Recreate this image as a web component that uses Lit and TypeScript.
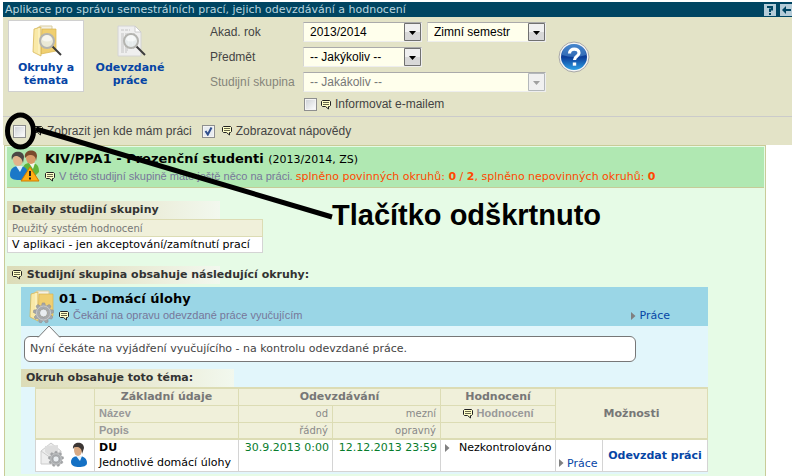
import { LitElement, html, css, svg } from "lit";
import { customElement } from "lit/decorators.js";

const note = html`<svg class="note" width="11" height="10" viewBox="0 0 11 10" aria-hidden="true">
  <path d="M1.500.5h7l1 1v4l-1 1h-1v2.500l-3-2.500h-3l-1-1v-4z" fill="#ffffc8" stroke="#222" />
  <path d="M2 2.500h6M2 4.500h6" stroke="#66664a" />
</svg>`;

const lens = svg`<path d="M22 21l9 9" stroke="#3c3c3c" stroke-width="2"/>
  <circle cx="17" cy="16" r="7" fill="#e9eff0" fill-opacity=".8" stroke="#b4b4b0" stroke-width="2"/>
  <path d="M12 15a5 5 0 0 1 10 0q-5 3-10 0z" fill="#fff" fill-opacity=".6"/>`;

const folder = svg`<path d="M6 4l4-3h12v23H8z" fill="#f4f1e6" stroke="#d9cda0"/>
  <path d="M12 4h14v22l-15 3z" fill="#f0cf70" stroke="#d8b450" stroke-width=".7"/>
  <path d="M4 4l7-2v29l-8-4z" fill="#f9e9a8" stroke="#d4b04a" stroke-width=".7"/>
  <path d="M9 3v26" stroke="#fdf6d0"/>`;

const teeth = [0, 40, 80, 120, 160, 200, 240, 280, 320];
const gear = svg`<g>${teeth.map(
  (a) => svg`<path d="M-2-7.500l.8-2.600h2.400L2-7.500z" fill="#a4a6a8" stroke="#8b8d90" stroke-width=".5" transform="rotate(${a})"/>`
)}<circle r="6" fill="none" stroke="#a8aaad" stroke-width="4"/><circle r="7" fill="none" stroke="#c6c8ca" stroke-width="1"/><circle r="4" fill="#e9edf0" stroke="#87898c" stroke-width=".7"/></g>`;

@customElement("app-root")
export class AppRoot extends LitElement {
  static styles = css`
    :host {
      display: block;
      position: relative;
      min-height: 100vh;
      overflow: hidden;
      box-sizing: border-box;
      padding: 2px 2px 0 3px;
      background: #fff;
      color: #000;
      font: 11px/15px "DejaVu Sans", Verdana, sans-serif;
    }
    * { box-sizing: border-box; }
    svg { display: block; flex: none; }
    a { color: #0645a5; text-decoration: none; }
    h1, h2, h3, p { margin: 0; font-size: 11px; }
    .arial { font: 12px/15px "Liberation Sans", Arial, sans-serif; }
    .note { display: inline-block; vertical-align: -2px; }

    .titlebar { display: flex; align-items: center; gap: 4px; height: 15px; padding-left: 2px; background: #004562; color: #b9d5df; }
    .titlebar h1 { flex: 1; font-weight: 400; line-height: 15px; }
    .tool { width: 12px; height: 12px; padding: 0; border: 0; background: #b5ccd8; color: #004562; }

    .toolbar { display: flex; height: 100px; background: #e3e3c7; border-bottom: 1px solid #cbcbcb; }
    .tabs { display: flex; gap: 8px; padding: 3px 0 0 5px; width: 207px; }
    .tab { display: flex; flex-direction: column; align-items: center; width: 76px; height: 72px; padding: 4px 0 0; border: 1px solid transparent; text-align: center; font-weight: 700; line-height: 13px; }
    .tab.active { background: #fff; border-color: #d0d0d0; }
    .tab svg { margin-bottom: 4px; }

    .form { display: grid; grid-template-columns: 88px 119px 119px; grid-template-rows: 20px 20px 20px 15px; gap: 5px; padding-top: 5px; color: #444; }
    .form > label { align-self: center; white-space: nowrap; }
    .form .off { color: #85857a; }
    .pick { display: grid; }
    .pick.wide { grid-column: 2 / 4; }
    .pick > * { grid-area: 1 / 1; }
    .pick svg { justify-self: end; align-self: center; margin-right: 1px; pointer-events: none; }
    select { appearance: none; width: 100%; height: 20px; margin: 0; padding: 0 20px 0 6px; border: 1px solid #eee; border-top: 1px solid #aaa; border-left-color: #d6d6d0; border-radius: 0; background: #ffffec; color: #000; font: 12px/17px "Liberation Sans", Arial, sans-serif; }
    select:disabled { color: #777; opacity: 1; }
    .mail { grid-column: 2 / 4; }
    .check { display: flex; align-items: center; gap: 4px; padding-left: 1px; white-space: nowrap; }
    .check label { display: flex; align-items: center; gap: 3px; }
    input { appearance: none; flex: none; width: 13px; height: 13px; margin: 0; border: 1px solid #8e8f8f; background: linear-gradient(135deg, #ccd0d4, #fff); box-shadow: inset 0 0 0 1px #f4f4f4; }
    input:checked { background: url("data:image/svg+xml,%3Csvg xmlns='http://www.w3.org/2000/svg' viewBox='0 0 11 11'%3E%3Cpath d='M2.500 5l2.300 3.500L8.500 1.500' fill='none' stroke='%23314f8c' stroke-width='2'/%3E%3C/svg%3E") #e8ecf0; }
    .help { align-self: flex-start; margin: 24px 0 0 12px; padding: 0; border: 0; background: none; }

    .filters { display: flex; gap: 9px; height: 28px; padding-left: 9px; background: #e3e3c7; color: #444; }
    .filters .check { gap: 7px; }
    .filters .check label { gap: 3px; }

    .panel { min-height: 340px; margin: 0 26px 0 1px; padding: 1px 0 0 2px; background: #e6fbe6; border: 1px solid #c9cb98; }
    .group { display: flex; gap: 4px; height: 41px; margin-right: 1px; padding: 3px 2px; background: #b0e8b2; border-bottom: 1px solid #c6cb98; }
    .group h2, .circle h3 { font-size: 13px; line-height: 17px; }
    .group small { font-size: 11px; font-weight: 400; }
    .hint { font: 11px/16px "Liberation Sans", Arial, sans-serif; color: #77779a; }
    .score { font: 11px/16px "DejaVu Sans", Verdana, sans-serif; color: #ff4800; }
    .line { white-space: nowrap; }
    .label { height: 18px; padding-left: 5px; background: linear-gradient(90deg, #dcdcb8, #e6e6cc 45%, #f2f8ee) no-repeat 0 0 / 213px 100%; color: #333; line-height: 18px; white-space: nowrap; }
    .details { margin-top: 13px; }
    .circles { margin-top: 13px; }

    table { border-collapse: collapse; }
    th, td { border: 1px solid #dcdcb4; padding: 0 4px; line-height: 15px; white-space: nowrap; }
    th { background: #f0f0da; color: #777; }
    td { background: #fff; border-color: #d4d4d4; }
    .sys { width: 256px; }
    .sys th { height: 17px; font-weight: 400; font-size: 10px; text-align: left; }
    .sys td { height: 16px; }

    .block { margin: 3px 57px 0 14px; padding-bottom: 2px; background: #e2f6fb; }
    .circle { display: flex; gap: 5px; height: 39px; padding: 3px 38px 3px 6px; background: #9ad6e6; }
    .circle > div { flex: 1; }
    .go { display: flex; align-items: center; gap: 3px; }
    .circle .go { align-self: flex-end; }
    .bubble { position: relative; height: 26px; margin: 10px 72px 7px 3px; padding-left: 5px; background: #fff; border: 1px solid #777; border-radius: 6px; line-height: 24px; color: #444; white-space: nowrap; }
    .tail { position: absolute; left: 12px; top: -12px; }

    .topics { width: calc(100% - 14px); margin-left: 14px; table-layout: fixed; }
    .topics thead tr { height: 17px; }
    .topics tbody tr { height: 32px; }
    .topics thead { border-top: 2px solid #dcdcb4; border-bottom: 2px solid #dcdcb4; }
    .c1 { width: 59px; } .c2 { width: 144px; } .c3 { width: 94px; } .c4 { width: 108px; } .c5 { width: 115px; } .c6 { width: 47px; }
    .topics .sub { font: bold 11px/15px "Liberation Sans", Arial, sans-serif; color: #999; }
    .left { text-align: left; }
    .topics .date { font-weight: 400; font-size: 10px; text-align: right; color: #888; }
    .top { vertical-align: top; }
    .bottom { vertical-align: bottom; padding: 0 3px; }
    .ok { color: #087c2c; text-align: right; padding: 0 3px; }
    .people { display: flex; gap: 6px; }
    .state { display: flex; align-items: center; gap: 9px; }
    .strong { font-weight: 700; }
    .center { text-align: center; padding: 0; }

    .mark { position: absolute; left: 0; top: 110px; pointer-events: none; }
    .caption { position: absolute; left: 332px; top: 198px; font: bold 29px/34px "Liberation Sans", Arial, sans-serif; white-space: nowrap; }
  `;

  private arrow(off = false) {
    return html`<svg width="17" height="18" viewBox="0 0 17 18" aria-hidden="true">
      <path d="M.5.5h16v17H.5z" fill="#f0f0f0" stroke=${off ? "#b4b8bb" : "#707070"} />
      <path d="M1 9h15v8H1z" fill=${off ? "#f0f0f0" : "#d8d8d8"} />
      <path d="M5 8h7l-3.500 4z" fill=${off ? "#a0a0a0" : "#000"} />
    </svg>`;
  }

  private go() {
    return html`<svg width="5" height="8" viewBox="0 0 5 8" aria-hidden="true"><path d="M0 0l4.500 4L0 8z" fill="#808080" /></svg>`;
  }

  render() {
    return html`
      <header class="titlebar">
        <h1>Aplikace pro správu semestrálních prací, jejich odevzdávání a hodnocení</h1>
        <button class="tool" aria-label="Nápověda">
          <svg width="12" height="12"><path d="M3 3h5v2.500H6V8M6 9v2" fill="none" stroke="#004562" stroke-width="2" /></svg>
        </button>
        <button class="tool" aria-label="Zpět">
          <svg width="12" height="12"><path d="M2 6l4-4v3h5v2H6v3z" fill="#004562" /></svg>
        </button>
      </header>

      <div class="toolbar">
        <nav class="tabs">
          <a class="tab active" href="#okruhy">
            <svg width="32" height="32" viewBox="0 0 32 32" aria-hidden="true">${folder}${lens}</svg>Okruhy a<br />témata</a>
          <a class="tab" href="#prace">
            <svg width="32" height="32" viewBox="0 0 32 32" aria-hidden="true">
              <path d="M4 1h17l6 6v24H4z" fill="#efefef" stroke="#d4d4d4" />
              <path d="M21 1v6h6z" fill="#fff" stroke="#ccc" />
              <path d="M7 5h9M7 9h14M7 11h16M7 13h16M7 15h16M7 17h16M7 19h16M7 21h16M7 23h13M7 25h8M7 27h6" stroke="#c4c4c4" stroke-dasharray="3 1" />
              ${lens}
            </svg>Odevzdané<br />práce</a>
        </nav>
        <form class="form arial">
          <label for="rok">Akad. rok</label>
          <div class="pick"><select id="rok"><option>2013/2014</option></select>${this.arrow()}</div>
          <div class="pick"><select aria-label="Semestr"><option>Zimní semestr</option></select>${this.arrow()}</div>
          <label for="predmet">Předmět</label>
          <div class="pick"><select id="predmet"><option>-- Jakýkoliv --</option></select>${this.arrow()}</div>
          <span></span>
          <label class="off" for="skupina">Studijní skupina</label>
          <div class="pick wide"><select id="skupina" disabled><option>-- Jakákoliv --</option></select>${this.arrow(true)}</div>
          <span></span>
          <div class="check mail"><input type="checkbox" id="mail" /><label for="mail">${note}Informovat e-mailem</label></div>
        </form>
        <button class="help" aria-label="Nápověda">
          <svg width="32" height="32" viewBox="0 0 32 32">
            <defs><linearGradient id="b" x2="0" y2="1"><stop stop-color="#2a6cc0" /><stop offset=".5" stop-color="#0c3c98" /><stop offset="1" stop-color="#2da0e6" /></linearGradient></defs>
            <circle cx="16" cy="16" r="15" fill="#f4f4f4" stroke="#a8a8a8" />
            <circle cx="16" cy="16" r="13" fill="url(#b)" />
            <path d="M4 14a12 11 0 0 1 24 0q-12 4-24 0z" fill="#6fb0e0" opacity=".4" />
            <path d="M11.500 12.500c0-6 9.500-5.500 9.500-.5 0 3.500-4.500 3-4.500 7" fill="none" stroke="#fff" stroke-width="3.200" />
            <path d="M14.800 21.500h3.400v3.200h-3.400z" fill="#fff" />
          </svg>
        </button>
      </div>

      <div class="filters arial">
        <div class="check"><input type="checkbox" id="jen" /><label for="jen">${note}Zobrazit jen kde mám práci</label></div>
        <div class="check"><input type="checkbox" id="napovedy" checked /><label for="napovedy">${note}Zobrazovat nápovědy</label></div>
      </div>

      <main class="panel">
        <div class="group">
          <svg width="32" height="34" viewBox="0 0 32 34" aria-hidden="true">
            <path d="M14 20c0-6 3-7 8-7 6 0 8 3 8 9l-3 3H15z" fill="#62b53a" />
            <path d="M20 13h6l-2 6z" fill="#f2f6ea" />
            <ellipse cx="22" cy="8" rx="5" ry="6" fill="#d99a68" /><path d="M16 8c-2-9 12-10 12-2l-1 5c0-5-3-6-6-6-2 0-3 1-5 3z" fill="#7a4a2c" />
            <path d="M1 25c0-7 4-9 9-9 6 0 9 3 9 9 0 4-3 5-9 5-5 0-9-1-9-5z" fill="#1b78c8" />
            <path d="M7 16h7l-3 6z" fill="#dff0fa" />
            <ellipse cx="9" cy="10" rx="5" ry="6" fill="#e2b48c" /><path d="M3 10C0 0 15-1 15 7l-1 6c-1-5-4-7-7-7-2 0-3 1-4 4z" fill="#4c4644" />
            <path d="M21 17l9 14H12z" fill="#ffae14" stroke="#d07a00" stroke-linejoin="round" />
            <path d="M21 21v5M21 27.500v2" stroke="#222" stroke-width="2" />
          </svg>
          <div>
            <h2 class="line">KIV/PPA1 - Prezenční studenti <small>(2013/2014, ZS)</small></h2>
            <p class="line hint">${note} V této studijní skupině máte ještě něco na práci. <span class="score">splněno povinných okruhů: <b>0</b> / <b>2</b>, splněno nepovinných okruhů: <b>0</b></span></p>
          </div>
        </div>

        <h3 class="label details">Detaily studijní skupiny</h3>
        <table class="sys">
          <tr><th>Použitý systém hodnocení</th></tr>
          <tr><td>V aplikaci - jen akceptování/zamítnutí prací</td></tr>
        </table>

        <h3 class="label circles">${note} Studijní skupina obsahuje následující okruhy:</h3>
        <section class="block">
          <div class="circle">
            <svg width="27" height="34" viewBox="0 0 27 34" aria-hidden="true">${folder}<g transform="translate(16.500 23)">${gear}</g></svg>
            <div>
              <h3 class="line">01 - Domácí úlohy</h3>
              <p class="line hint">${note} Čekání na opravu odevzdané práce vyučujícím</p>
            </div>
            <a class="go" href="#okruh-prace">${this.go()}Práce</a>
          </div>
          <div class="bubble">
            <svg class="tail" width="24" height="13" viewBox="0 0 24 13" aria-hidden="true"><path d="M1 12.500L12 1l11 11.500" fill="#fff" stroke="#777" /></svg>
            Nyní čekáte na vyjádření vyučujícího - na kontrolu odevzdané práce.
          </div>
          <h3 class="label">Okruh obsahuje toto téma:</h3>
          <table class="topics">
            <colgroup><col class="c1" /><col class="c2" /><col class="c3" /><col class="c4" /><col class="c5" /><col class="c6" /><col /></colgroup>
            <thead>
              <tr><th rowspan="3"></th><th>Základní údaje</th><th colspan="2">Odevzdávání</th><th>Hodnocení</th><th rowspan="3" colspan="2">Možnosti</th></tr>
              <tr><th class="sub left">Název</th><th class="date">od</th><th class="date">mezní</th><th class="sub">${note} Hodnocení</th></tr>
              <tr><th class="sub left">Popis</th><th class="date">řádný</th><th class="date">opravný</th><th></th></tr>
            </thead>
            <tbody>
              <tr>
                <td><div class="people">
                  <svg width="24" height="26" viewBox="0 0 24 26" aria-hidden="true">
                    <path d="M1 9L11 1l10 8v13H1z" fill="#eee" stroke="#ccc" /><path d="M5 4l13-1v8l-7 4-6-5z" fill="#ddd" /><path d="M1 9l10 7 10-7" fill="none" stroke="#ccc" />
                    <g transform="translate(16 17) scale(.75)">${gear}</g>
                  </svg>
                  <svg width="18" height="26" viewBox="0 0 18 26" aria-hidden="true">
                    <path d="M1 20c0-4 3-6 8-6s8 3 8 7c0 3-4 4-8 4s-8-1-8-5z" fill="#1470c4" /><path d="M6 14h6l-2 5z" fill="#e8f4fc" />
                    <ellipse cx="8" cy="8" rx="4" ry="6" fill="#d9aa84" /><path d="M3 7C2-1 14-1 14 6l-2 6c0-5-2-7-5-7-2 0-3 0-4 2z" fill="#3c3634" />
                  </svg>
                </div></td>
                <td class="top"><b>DU</b><br />Jednotlivé domácí úlohy</td>
                <td class="top ok">30.9.2013 0:00</td>
                <td class="top ok">12.12.2013 23:59</td>
                <td class="top"><div class="state">${this.go()}Nezkontrolováno</div></td>
                <td class="bottom"><a class="go" href="#tema-prace">${this.go()}Práce</a></td>
                <td class="center"><a class="strong" href="#odevzdat">Odevzdat práci</a></td>
              </tr>
            </tbody>
          </table>
        </section>
      </main>

      <svg class="mark" width="340" height="115" viewBox="0 0 340 115" aria-hidden="true">
        <ellipse cx="20.500" cy="21" rx="13" ry="16" fill="none" stroke="#000" stroke-width="5" />
        <path d="M36 19L332 107" stroke="#000" stroke-width="5" />
      </svg>
      <div class="caption">Tlačítko odškrtnuto</div>
    `;
  }
}
